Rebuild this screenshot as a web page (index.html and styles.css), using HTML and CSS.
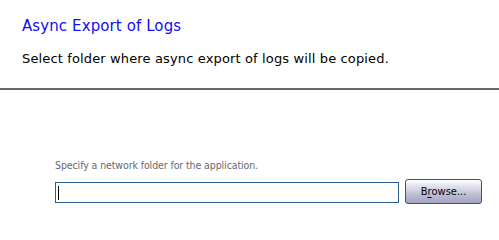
FILE: index.html
```html
<!DOCTYPE html>
<html>
<head>
<meta charset="utf-8">
<link rel="stylesheet" href="styles.css">
</head>
<body>
<div class="header">
  <div class="title">Async Export of Logs</div>
  <div class="subtitle">Select folder where async export of logs will be copied.</div>
</div>
<div class="content">
  <div class="label">Specify a network folder for the application.</div>
  <div class="row">
    <div class="input"><span class="caret"></span></div>
    <div class="button">B<u>r</u>owse...</div>
  </div>
</div>
</body>
</html>
```
FILE: styles.css
```css
html, body {
  margin: 0;
  padding: 0;
  background: #ffffff;
}
body {
  width: 499px;
  height: 235px;
  overflow: hidden;
}
.header {
  height: 90px;
  box-sizing: border-box;
  padding: 17px 0 0 22px;
  border-bottom: 2px solid #686868;
}
.title {
  font-family: "DejaVu Sans", Verdana, sans-serif;
  font-size: 15px;
  line-height: 18px;
  letter-spacing: 0.1px;
  color: #1010f0;
}
.subtitle {
  margin-top: 16px;
  font-family: "DejaVu Sans", Verdana, sans-serif;
  font-size: 13px;
  line-height: 16px;
  letter-spacing: 0.14px;
  color: #000000;
}
.content {
  padding: 69px 0 0 55px;
}
.label {
  font-family: "DejaVu Sans Condensed", Tahoma, sans-serif;
  font-size: 10.5px;
  line-height: 13px;
  letter-spacing: -0.1px;
  color: #666a70;
}
.row {
  display: flex;
  align-items: flex-start;
  margin-top: 9px;
}
.input {
  width: 344px;
  height: 21px;
  box-sizing: border-box;
  border: 1px solid #2b5e8a;
  margin-top: 1px;
  display: flex;
  align-items: center;
  padding-left: 2px;
}
.caret {
  width: 1px;
  height: 14px;
  background: #000;
}
.button {
  margin-left: 6px;
  width: 77px;
  height: 25px;
  box-sizing: border-box;
  border: 1px solid #4e4e5e;
  border-radius: 3px;
  background: linear-gradient(#ffffff 0%, #e4e4ee 25%, #b8b8d0 70%, #a4a4c4 100%);
  font-family: "DejaVu Sans Condensed", Tahoma, sans-serif;
  font-size: 11px;
  color: #000;
  display: flex;
  align-items: center;
  justify-content: center;
  margin-top: -2px;
}
.button u {
  text-decoration-thickness: 1px;
  text-underline-offset: 2px;
}
```
